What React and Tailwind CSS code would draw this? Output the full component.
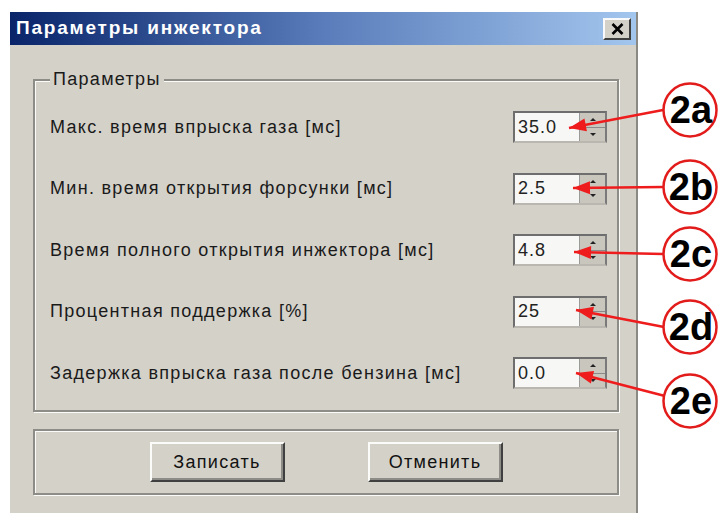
const rows = [
  { label: 'Макс. время впрыска газа [мс]', value: '35.0' },
  { label: 'Мин. время открытия форсунки [мс]', value: '2.5' },
  { label: 'Время полного открытия инжектора [мс]', value: '4.8' },
  { label: 'Процентная поддержка [%]', value: '25' },
  { label: 'Задержка впрыска газа после бензина [мс]', value: '0.0' },
];

// callouts: circle centre + arrow tip on the field
const callouts = [
  { tag: '2a', cy: 110, from: [663, 110], tip: [569, 128] },
  { tag: '2b', cy: 187, from: [663, 187], tip: [573, 188] },
  { tag: '2c', cy: 254, from: [663, 254], tip: [574, 252] },
  { tag: '2d', cy: 327, from: [664, 327], tip: [576, 310] },
  { tag: '2e', cy: 401, from: [665, 396], tip: [576, 373] },
];

// filled arrow head pointing from `from` to `tip`
const headPoints = ([x1, y1], [x2, y2], len = 17, half = 6.5) => {
  const dx = x2 - x1;
  const dy = y2 - y1;
  const d = Math.hypot(dx, dy);
  const ux = dx / d;
  const uy = dy / d;
  const bx = x2 - ux * len;
  const by = y2 - uy * len;
  return `${x2},${y2} ${bx - uy * half},${by + ux * half} ${bx + uy * half},${by - ux * half}`;
};

const SpinField = ({ value }) => (
  <div className="flex h-[32px] w-[94px] border-2 border-t-[#6e6e6e] border-l-[#6e6e6e] border-b-[#b9b7b0] border-r-[#7a7a7a] bg-[#f7f7f5]">
    <div className="flex flex-1 items-center pl-[3px] text-[18px] tracking-[1px] text-[#222]">{value}</div>
    <div className="flex w-[26px] flex-col border-l border-[#9a9a9a] bg-[#c9c6be]">
      <div className="flex flex-1 items-center justify-center border-b border-[#8a8a8a]">
        <div className="h-0 w-0 border-x-[3px] border-b-[3px] border-x-transparent border-b-[#222]" />
      </div>
      <div className="flex flex-1 items-center justify-center">
        <div className="h-0 w-0 border-x-[3px] border-t-[3px] border-x-transparent border-t-[#222]" />
      </div>
    </div>
  </div>
);

const WinButton = ({ children }) => (
  <button className="flex h-[40px] w-[135px] items-center justify-center border-2 border-t-[#fbfbf9] border-l-[#fbfbf9] border-b-[#404040] border-r-[#404040] bg-[#d4d1c9] text-[18px] tracking-[1.3px] text-[#111] shadow-[inset_-2px_-2px_0_#8e8c86]">
    {children}
  </button>
);

const Callouts = () => (
  <svg className="pointer-events-none absolute left-0 top-0" width="720" height="513">
    {callouts.map((c) => (
      <g key={c.tag}>
        <line x1={c.from[0]} y1={c.from[1]} x2={c.tip[0]} y2={c.tip[1]} stroke="#ee1c1c" strokeWidth="2.5" />
        <polygon points={headPoints(c.from, c.tip)} fill="#ee1c1c" />
        <circle cx="690" cy={c.cy} r="26.5" fill="#fff" stroke="#e21b1b" strokeWidth="2.5" />
        <text
          x="691"
          y={c.cy + 13}
          textAnchor="middle"
          fontFamily="Liberation Sans, Arial, sans-serif"
          fontWeight="700"
          fontSize="38"
          fill="#000"
        >
          {c.tag}
        </text>
      </g>
    ))}
  </svg>
);

export default function App() {
  return (
    <div className="relative h-[513px] w-[720px] overflow-hidden bg-white font-['Liberation_Sans',Arial,sans-serif]">
      <div className="ml-[10px] mt-[12px] flex h-[501px] w-[628px] flex-col border-r-2 border-[#8a8984] bg-[#d4d1c9]">
        {/* title bar */}
        <div className="flex h-[33px] items-center justify-between bg-gradient-to-r from-[#0a246a] via-[#5a7cba] to-[#a3c6ee] pl-[6px] pr-[5px]">
          <span className="text-[19px] font-bold tracking-[1.8px] text-white">Параметры инжектора</span>
          <div className="flex h-[22px] w-[28px] items-center justify-center border-2 border-t-[#fafafa] border-l-[#fafafa] border-b-[#404040] border-r-[#404040] bg-[#d4d1c9]">
            <svg width="13" height="12" viewBox="0 0 13 12">
              <path d="M1.5 1 L11.5 11 M11.5 1 L1.5 11" stroke="#000" strokeWidth="2.6" />
            </svg>
          </div>
        </div>

        {/* parameters group */}
        <div className="relative ml-[23px] mr-[17px] mt-[34px] h-[333px] border-2 border-[#8e8c86] shadow-[inset_1px_1px_0_#fbfbf9,1px_1px_0_#fbfbf9]">
          <span className="absolute left-[15px] top-[-13px] bg-[#d4d1c9] px-[3px] text-[18px] leading-[22px] tracking-[1.3px] text-[#1a1a1a]">
            Параметры
          </span>
          <div className="flex flex-col gap-[29.5px] pl-[15px] pr-[10px] pt-[30px]">
            {rows.map((r) => (
              <div key={r.label} className="flex h-[32px] items-center justify-between">
                <span className="text-[18px] tracking-[1.3px] text-[#1a1a1a]">{r.label}</span>
                <SpinField value={r.value} />
              </div>
            ))}
          </div>
        </div>

        {/* buttons group */}
        <div className="ml-[23px] mr-[17px] mt-[17px] flex h-[66px] items-center justify-center gap-[83px] border-2 border-[#8e8c86] shadow-[inset_1px_1px_0_#fbfbf9,1px_1px_0_#fbfbf9]">
          <WinButton>Записать</WinButton>
          <WinButton>Отменить</WinButton>
        </div>
      </div>
      <Callouts />
    </div>
  );
}
